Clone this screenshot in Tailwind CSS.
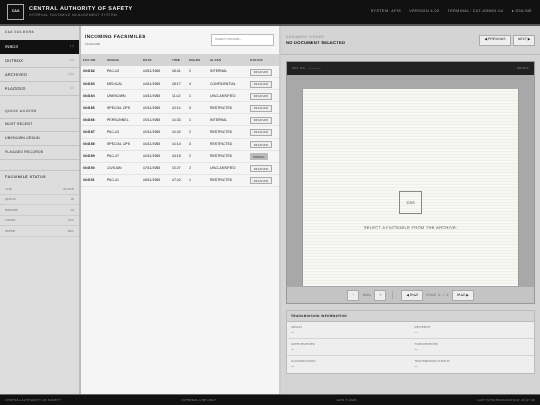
<!DOCTYPE html>
<html><head><meta charset="utf-8"><script src="https://cdn.jsdelivr.net/npm/@tailwindcss/browser@4"></script></head>
<body class="m-0 overflow-hidden">
<div class="w-[540px] h-[405px] flex flex-col overflow-hidden bg-[#d4d4d4] font-['Liberation_Sans',sans-serif] text-[#222] [will-change:transform] [text-rendering:geometricPrecision]">
<header class="h-[26px] shrink-0 bg-[#111] border-b-2 border-[#555] flex items-center justify-between pl-[7px] pr-[8px] pb-px">
 <div class="flex items-center gap-[5px]">
  <div class="w-[17px] h-[16px] border border-[#aaa] flex items-center justify-center text-[3.6px] font-bold text-[#eee]">CAS</div>
  <div><div class="text-[5.4px] leading-[7px] font-bold tracking-[0.5px] text-[#eee]">CENTRAL AUTHORITY OF SAFETY</div><div class="text-[3.4px] leading-[5px] tracking-[0.35px] text-[#888]">INTERNAL FACSIMILE MANAGEMENT SYSTEM</div></div>
 </div>
 <div class="flex gap-[8px] text-[3.7px] tracking-[0.45px] text-[#aaa]"><span>SYSTEM: AFIS</span><span>VERSION 4.02</span><span>TERMINAL: CAT-ADMIN-04</span><span>● ONLINE</span></div>
</header>
<div class="flex-1 flex min-h-0">
 <aside class="w-[81px] shrink-0 bg-[#ddd] border-r-2 border-[#bbb] text-[#222]">
  <div class="h-[14px] pl-[5px] pt-[4px] text-[3.4px] font-bold tracking-[0.5px] text-[#555]">FAX FOLDERS</div>
  <div class="h-[14px] bg-[#111] text-[#eee] flex items-center justify-between px-[5px] text-[4px] tracking-[0.2px]"><span>INBOX</span><span class="text-[3.4px] text-[#777]">12</span></div>
  <div class="h-[14px] border-b border-[#c4c4c4] flex items-center justify-between px-[5px] text-[4px] tracking-[0.2px]"><span>OUTBOX</span><span class="text-[3.4px] text-[#999]">04</span></div>
  <div class="h-[14px] border-b border-[#c4c4c4] flex items-center justify-between px-[5px] text-[4px] tracking-[0.2px]"><span>ARCHIVED</span><span class="text-[3.4px] text-[#999]">184</span></div>
  <div class="h-[14px] border-b border-[#c4c4c4] flex items-center justify-between px-[5px] text-[4px] tracking-[0.2px]"><span>FLAGGED</span><span class="text-[3.4px] text-[#999]">03</span></div>
  <div class="h-[21px] pl-[5px] pt-[13px] text-[3.4px] leading-[5px] font-bold tracking-[0.5px] text-[#555]">QUICK ACCESS</div>
  <div class="h-[14px] mt-px border-t border-b border-[#c4c4c4] flex items-center px-[5px] text-[3.5px] tracking-[0.2px]">MOST RECENT</div>
  <div class="h-[14px] border-b border-[#c4c4c4] flex items-center px-[5px] text-[3.5px] tracking-[0.2px]">UNKNOWN ORIGIN</div>
  <div class="h-[14px] border-b border-[#c4c4c4] flex items-center px-[5px] text-[3.5px] tracking-[0.2px]">FLAGGED RECORDS</div>
  <div class="h-[25px] border-t border-[#c4c4c4] mt-[10px] pl-[5px] pt-[4px] text-[3.5px] leading-[5px] font-bold tracking-[0.5px] text-[#444]">FACSIMILE STATUS</div>
  <div class="h-[10.5px] -mt-[11px] border-b border-[#ccc] flex items-center justify-between px-[5px] text-[3px] text-[#777]"><span>LINE</span><span>ACTIVE</span></div>
  <div class="h-[10.5px] border-b border-[#ccc] flex items-center justify-between px-[5px] text-[3px] text-[#777]"><span>QUEUE</span><span>02</span></div>
  <div class="h-[10.5px] border-b border-[#ccc] flex items-center justify-between px-[5px] text-[3px] text-[#777]"><span>ERRORS</span><span>01</span></div>
  <div class="h-[10.5px] border-b border-[#ccc] flex items-center justify-between px-[5px] text-[3px] text-[#777]"><span>TONER</span><span>67%</span></div>
  <div class="h-[10.5px] border-b border-[#ccc] flex items-center justify-between px-[5px] text-[3px] text-[#777]"><span>PAPER</span><span>84%</span></div>
 </aside>
 <section class="w-[200px] shrink-0 bg-[#f5f5f5] border-r-2 border-[#ccc]">
  <div class="h-[28px] flex items-center justify-between pl-[4px] pr-[4px]">
   <div class="pt-px"><div class="text-[4.6px] leading-[6px] font-bold tracking-[0.45px] text-[#111]">INCOMING FACSIMILES</div><div class="text-[3.2px] leading-[5px] text-[#666] mt-[2px]">10 records</div></div>
   <div class="w-[63px] h-[12px] mr-[1px] bg-white border border-[#bbb] flex items-center pl-[3px] text-[3.6px] text-[#888]">Search records...</div>
  </div>
  <div class="grid grid-cols-[24px_36px_29px_17px_21px_40px_1fr] pl-[2px] h-[12px] pt-[1px] items-center bg-[#d4d4d4] text-[3px] font-bold tracking-[0.2px] text-[#333]"><span>FAX NO.</span><span>ORIGIN</span><span>DATE</span><span>TIME</span><span>PAGES</span><span>CLASS</span><span>STATUS</span></div>
  <div class="grid grid-cols-[24px_36px_29px_17px_21px_40px_1fr] pl-[2px] h-[12.1px] pt-[1px] items-center border-b border-[#e4e4e4] text-[3.5px] text-[#222]"><span class="font-bold">004182</span><span>PAC-03</span><span>04/11/1998</span><span>08:41</span><span>2</span><span>INTERNAL</span><span class="w-[22px] h-[7px] border border-[#aaa] bg-[#eee] text-[2.8px] flex items-center justify-center text-[#444]">RECEIVED</span></div>
  <div class="grid grid-cols-[24px_36px_29px_17px_21px_40px_1fr] pl-[2px] h-[12.1px] pt-[1px] items-center border-b border-[#e4e4e4] text-[3.5px] text-[#222]"><span class="font-bold">004183</span><span>MEDICAL</span><span>04/11/1998</span><span>09:17</span><span>4</span><span>CONFIDENTIAL</span><span class="w-[22px] h-[7px] border border-[#aaa] bg-[#eee] text-[2.8px] flex items-center justify-center text-[#444]">RECEIVED</span></div>
  <div class="grid grid-cols-[24px_36px_29px_17px_21px_40px_1fr] pl-[2px] h-[12.1px] pt-[1px] items-center border-b border-[#e4e4e4] text-[3.5px] text-[#222]"><span class="font-bold">004184</span><span>UNKNOWN</span><span>04/11/1998</span><span>11:02</span><span>1</span><span>UNCLASSIFIED</span><span class="w-[22px] h-[7px] border border-[#aaa] bg-[#eee] text-[2.8px] flex items-center justify-center text-[#444]">RECEIVED</span></div>
  <div class="grid grid-cols-[24px_36px_29px_17px_21px_40px_1fr] pl-[2px] h-[12.1px] pt-[1px] items-center border-b border-[#e4e4e4] text-[3.5px] text-[#222]"><span class="font-bold">004185</span><span>SPECIAL OPS</span><span>05/11/1998</span><span>02:16</span><span>3</span><span>RESTRICTED</span><span class="w-[22px] h-[7px] border border-[#aaa] bg-[#eee] text-[2.8px] flex items-center justify-center text-[#444]">RECEIVED</span></div>
  <div class="grid grid-cols-[24px_36px_29px_17px_21px_40px_1fr] pl-[2px] h-[12.1px] pt-[1px] items-center border-b border-[#e4e4e4] text-[3.5px] text-[#222]"><span class="font-bold">004186</span><span>PERSONNEL</span><span>05/11/1998</span><span>10:33</span><span>1</span><span>INTERNAL</span><span class="w-[22px] h-[7px] border border-[#aaa] bg-[#eee] text-[2.8px] flex items-center justify-center text-[#444]">RECEIVED</span></div>
  <div class="grid grid-cols-[24px_36px_29px_17px_21px_40px_1fr] pl-[2px] h-[12.1px] pt-[1px] items-center border-b border-[#e4e4e4] text-[3.5px] text-[#222]"><span class="font-bold">004187</span><span>PAC-03</span><span>05/11/1998</span><span>16:42</span><span>2</span><span>RESTRICTED</span><span class="w-[22px] h-[7px] border border-[#aaa] bg-[#eee] text-[2.8px] flex items-center justify-center text-[#444]">RECEIVED</span></div>
  <div class="grid grid-cols-[24px_36px_29px_17px_21px_40px_1fr] pl-[2px] h-[12.1px] pt-[1px] items-center border-b border-[#e4e4e4] text-[3.5px] text-[#222]"><span class="font-bold">004188</span><span>SPECIAL OPS</span><span>06/11/1998</span><span>01:14</span><span>3</span><span>RESTRICTED</span><span class="w-[22px] h-[7px] border border-[#aaa] bg-[#eee] text-[2.8px] flex items-center justify-center text-[#444]">RECEIVED</span></div>
  <div class="grid grid-cols-[24px_36px_29px_17px_21px_40px_1fr] pl-[2px] h-[12.1px] pt-[1px] items-center border-b border-[#e4e4e4] text-[3.5px] text-[#222]"><span class="font-bold">004189</span><span>PAC-07</span><span>06/11/1998</span><span>03:19</span><span>2</span><span>RESTRICTED</span><span class="w-[18px] h-[7px] bg-[#bbb] text-[2.8px] flex items-center justify-center text-[#333]">PARTIAL</span></div>
  <div class="grid grid-cols-[24px_36px_29px_17px_21px_40px_1fr] pl-[2px] h-[12.1px] pt-[1px] items-center border-b border-[#e4e4e4] text-[3.5px] text-[#222]"><span class="font-bold">004190</span><span>CIVILIAN</span><span>07/11/1998</span><span>15:27</span><span>2</span><span>UNCLASSIFIED</span><span class="w-[22px] h-[7px] border border-[#aaa] bg-[#eee] text-[2.8px] flex items-center justify-center text-[#444]">RECEIVED</span></div>
  <div class="grid grid-cols-[24px_36px_29px_17px_21px_40px_1fr] pl-[2px] h-[12.1px] pt-[1px] items-center border-b border-[#e4e4e4] text-[3.5px] text-[#222]"><span class="font-bold">004191</span><span>PAC-01</span><span>08/11/1998</span><span>07:02</span><span>1</span><span>RESTRICTED</span><span class="w-[22px] h-[7px] border border-[#aaa] bg-[#eee] text-[2.8px] flex items-center justify-center text-[#444]">RECEIVED</span></div>
 </section>
 <main class="flex-1 min-w-0 bg-[#d4d4d4] flex flex-col">
  <div class="h-[29px] shrink-0 border-b border-[#bbb] flex items-center justify-between pl-[5px] pr-[5px]">
   <div><div class="text-[3.3px] leading-[5px] tracking-[0.35px] text-[#888]">DOCUMENT VIEWER</div><div class="text-[4.2px] leading-[6px] font-bold tracking-[0.2px] text-[#111]">NO DOCUMENT SELECTED</div></div>
   <div class="flex gap-[2px] text-[3.4px] text-[#222]"><span class="w-[32px] h-[11px] bg-[#eee] border border-[#aaa] flex items-center justify-center">◀ PREVIOUS</span><span class="w-[22px] h-[11px] bg-[#eee] border border-[#aaa] flex items-center justify-center">NEXT ▶</span></div>
  </div>
  <div class="mx-[5px] mt-[6px] h-[243px] shrink-0 border border-[#999] flex flex-col bg-[#a8a8a8]">
   <div class="h-[13px] shrink-0 bg-[#222] flex items-center justify-between px-[5px] text-[3px] tracking-[0.3px] text-[#888]"><span>FAX NO.: ————</span><span>READY</span></div>
   <div class="flex-1 min-h-0 px-[15px] pt-[14px]">
    <div class="h-full border-r border-l border-[#999] flex flex-col items-center bg-[repeating-linear-gradient(0deg,#f7f8f3_0,#f7f8f3_2px,#eeefe9_2px,#eeefe9_3px)]">
     <div class="mt-[102px] w-[23px] h-[23px] border border-[#888] flex items-center justify-center text-[4px] text-[#444]">CAS</div>
     <div class="mt-[11px] text-[4.2px] tracking-[0.2px] text-[#666]">SELECT A FACSIMILE FROM THE ARCHIVE.</div>
    </div>
   </div>
   <div class="h-[17px] shrink-0 bg-[#c4c4c4] border-t border-[#aaa] flex items-center justify-center gap-[3px] text-[3.2px] text-[#666]">
    <span class="w-[12px] h-[11px] bg-[#eee] border border-[#aaa] flex items-center justify-center text-[#222]">−</span><span class="w-[9px] text-center">100%</span><span class="w-[12px] h-[11px] bg-[#eee] border border-[#aaa] flex items-center justify-center text-[#222]">+</span>
    <span class="w-px h-[8px] mx-[3px] bg-[#aaa]"></span>
    <span class="w-[22px] h-[11px] ml-[2px] bg-[#eee] border border-[#aaa] flex items-center justify-center text-[#222]">◀ PAGE</span><span class="tracking-[0.3px] whitespace-pre">PAGE  0  /  0</span><span class="w-[22px] h-[11px] bg-[#eee] border border-[#aaa] flex items-center justify-center text-[#222]">PAGE ▶</span>
   </div>
  </div>
  <div class="mx-[5px] mt-[6px] h-[64px] shrink-0 border border-[#bbb] bg-[#eee]">
   <div class="h-[11px] bg-[#d4d4d4] border-b border-[#bbb] flex items-center pl-[4px] text-[3.2px] font-bold tracking-[0.35px] text-[#222]">TRANSMISSION INFORMATION</div>
   <div class="grid grid-cols-2 grid-rows-[17px_17px_17px]">
    <div class="border-b border-[#d4d4d4] pl-[4px] pt-[3px] text-[3px] leading-[5px] text-[#777]">ORIGIN<div class="text-[#333]">—</div></div>
    <div class="border-b border-[#d4d4d4] pl-[4px] pt-[3px] text-[3px] leading-[5px] text-[#777]">RECIPIENT<div class="text-[#333]">—</div></div>
    <div class="border-b border-[#d4d4d4] pl-[4px] pt-[3px] text-[3px] leading-[5px] text-[#777]">DATE RECEIVED<div class="text-[#333]">—</div></div>
    <div class="border-b border-[#d4d4d4] pl-[4px] pt-[3px] text-[3px] leading-[5px] text-[#777]">TIME RECEIVED<div class="text-[#333]">—</div></div>
    <div class="pl-[4px] pt-[3px] text-[3px] leading-[5px] text-[#777]">CLASSIFICATION<div class="text-[#333]">—</div></div>
    <div class="pl-[4px] pt-[3px] text-[3px] leading-[5px] text-[#777]">TRANSMISSION STATUS<div class="text-[#333]">—</div></div>
   </div>
  </div>
 </main>
</div>
<footer class="h-[11px] shrink-0 bg-[#111] border-t border-[#666] flex items-center justify-between px-[5px] text-[3px] tracking-[0.25px] text-[#888]"><span>CENTRAL AUTHORITY OF SAFETY</span><span>INTERNAL USE ONLY</span><span>AFIS © 2026</span><span>LAST SYNCHRONIZATION: 22:47:09</span></footer>
</div>
</body></html>
